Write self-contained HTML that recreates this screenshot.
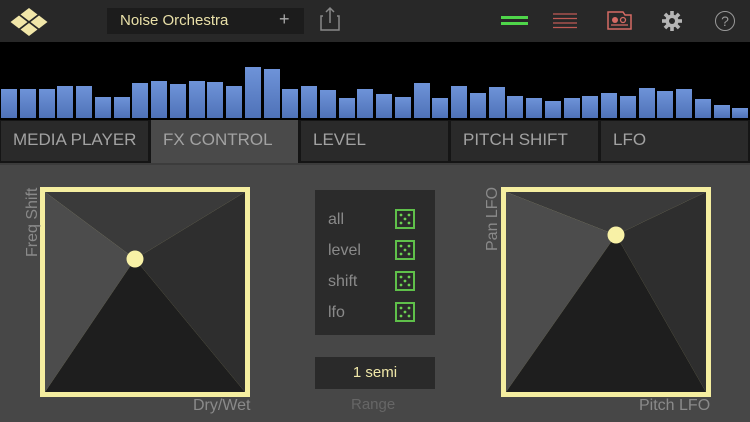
<!DOCTYPE html>
<html><head><style>
*{margin:0;padding:0;box-sizing:border-box}
body{width:750px;height:422px;background:#474747;font-family:"Liberation Sans",sans-serif;position:relative;overflow:hidden}
.hdr{position:absolute;left:0;top:0;width:750px;height:42px;background:#282828}
.viz{position:absolute;left:0;top:42px;width:750px;height:78px;background:#000}
.bar{position:absolute;bottom:2px;width:16px;background:linear-gradient(#6e93d8,#4f72b8)}
.tab{position:absolute;top:121px;height:40px;background:#2a2a2a;color:#a2a2a2;font-size:17px;line-height:38px;padding-left:12px}
.abs{position:absolute}
.lbl{color:#8a8a8a;font-size:16px}
</style></head><body>
<div class="hdr"></div>
<svg class="abs" style="left:9px;top:8px" width="40" height="28" viewBox="0 0 40 28">
<g fill="#f1e6a8"><polygon points="20,0 28.5,6.5 20,13 11.5,6.5"/><polygon points="10,7.5 18.5,14 10,20.5 1.5,14"/><polygon points="30,7.5 38.5,14 30,20.5 21.5,14"/><polygon points="20,15 28.5,21.5 20,28 11.5,21.5"/></g></svg>
<div class="abs" style="left:107px;top:8px;width:197px;height:26px;background:#1c1c1c"></div>
<div class="abs" style="left:120px;top:12px;color:#e9e0a8;font-size:15px">Noise Orchestra</div>
<div class="abs" style="left:279px;top:9px;color:#aaa;font-size:18px">+</div>
<svg class="abs" style="left:320px;top:6px" width="20" height="26"><path d="M3 10H1v14h18V10h-2M10 2v15M6 6l4-4 4 4" fill="none" stroke="#888" stroke-width="1.5"/></svg>
<div class="abs" style="left:501px;top:16px;width:27px;height:3px;background:#4fd64a"></div>
<div class="abs" style="left:501px;top:22px;width:27px;height:3px;background:#4fd64a"></div>
<svg class="abs" style="left:553px;top:13px" width="24" height="16"><g stroke="#c05a54" stroke-width="1.3"><path d="M0 1h24M0 5.5h24M0 10h24M0 14.5h24"/></g></svg>
<svg class="abs" style="left:607px;top:11px" width="25" height="19"><path d="M1 1h15l2 3h6v14H1z" fill="none" stroke="#d66a64" stroke-width="1.5"/><circle cx="8" cy="9" r="3" fill="#d66a64"/><circle cx="16" cy="9" r="2.5" fill="none" stroke="#d66a64" stroke-width="1.3"/><path d="M4 14h17" stroke="#d66a64" stroke-width="1.3"/></svg>
<svg class="abs" style="left:662px;top:11px" width="20" height="20" viewBox="-10 -10 20 20"><g fill="#b5b5b5"><circle r="6.5"/><g id="t"><rect x="-1.8" y="-10" width="3.6" height="4"/></g><use href="#t" transform="rotate(45)"/><use href="#t" transform="rotate(90)"/><use href="#t" transform="rotate(135)"/><use href="#t" transform="rotate(180)"/><use href="#t" transform="rotate(225)"/><use href="#t" transform="rotate(270)"/><use href="#t" transform="rotate(315)"/></g><circle r="3" fill="#282828"/></svg>
<div class="abs" style="left:715px;top:11px;width:20px;height:20px;border:1.3px solid #999;border-radius:50%;color:#999;font-size:14px;text-align:center;line-height:18px">?</div>
<div class="viz" id="viz"></div>
<div class="abs" style="left:0;top:120px;width:750px;height:43px;background:#151515"></div>
<div class="tab" style="left:1px;width:147px">MEDIA PLAYER</div>
<div class="tab" style="left:151px;width:147px;background:#4a4a4a;top:120px;height:43px;line-height:40px">FX CONTROL</div>
<div class="tab" style="left:301px;width:147px">LEVEL</div>
<div class="tab" style="left:451px;width:147px">PITCH SHIFT</div>
<div class="tab" style="left:601px;width:147px">LFO</div>
<div class="abs" style="left:0;top:163px;width:750px;height:2px;background:#3c3c3c"></div>

<svg class="abs" style="left:40px;top:187px" width="210" height="210">
<rect x="0" y="0" width="210" height="210" fill="#f5eea0"/>
<polygon points="5,5 205,5 95,72" fill="#3a3a3a"/>
<polygon points="5,5 95,72 5,205" fill="#4c4c4c"/>
<polygon points="205,5 205,205 95,72" fill="#2e2e2e"/>
<polygon points="5,205 205,205 95,72" fill="#1e1e1e"/>
<circle cx="95" cy="72" r="8.5" fill="#f8f1a6"/></svg>
<div class="abs lbl" style="left:24px;top:257px;transform:rotate(-90deg);transform-origin:0 0;white-space:nowrap">Freq Shift</div>
<div class="abs lbl" style="left:193px;top:397px">Dry/Wet</div>

<svg class="abs" style="left:501px;top:187px" width="210" height="210">
<rect x="0" y="0" width="210" height="210" fill="#f5eea0"/>
<polygon points="5,5 205,5 115,48" fill="#3a3a3a"/>
<polygon points="5,5 115,48 5,205" fill="#4c4c4c"/>
<polygon points="205,5 205,205 115,48" fill="#2e2e2e"/>
<polygon points="5,205 205,205 115,48" fill="#1e1e1e"/>
<circle cx="115" cy="48" r="8.5" fill="#f8f1a6"/></svg>
<div class="abs lbl" style="left:484px;top:251px;transform:rotate(-90deg);transform-origin:0 0;white-space:nowrap">Pan LFO</div>
<div class="abs lbl" style="left:639px;top:397px">Pitch LFO</div>

<div class="abs" style="left:315px;top:190px;width:120px;height:145px;background:#2b2b2b"></div>
<div class="abs lbl" style="left:328px;top:211px">all</div>
<div class="abs lbl" style="left:328px;top:242px">level</div>
<div class="abs lbl" style="left:328px;top:273px">shift</div>
<div class="abs lbl" style="left:328px;top:304px">lfo</div>
<svg class="abs" style="left:395px;top:209px" width="22" height="118">
<defs><g id="d"><rect x="1" y="1" width="18" height="18" fill="none" stroke="#5fc04a" stroke-width="2"/><g fill="#6bd052"><circle cx="6" cy="6" r="1.4"/><circle cx="14" cy="6" r="1.4"/><circle cx="10" cy="10" r="1.4"/><circle cx="6" cy="14" r="1.4"/><circle cx="14" cy="14" r="1.4"/></g></g></defs>
<use href="#d" y="0"/><use href="#d" y="31"/><use href="#d" y="62"/><use href="#d" y="93"/></svg>
<div class="abs" style="left:315px;top:357px;width:120px;height:32px;background:#2a2a2a;color:#f0e8a8;font-size:15px;text-align:center;line-height:32px">1 semi</div>
<div class="abs" style="left:351px;top:396px;color:#666;font-size:15px">Range</div>
<script>
var h=[89,89,89,86,86,97,97,83,81,84,81,82,86,67,69,89,86,90,98,89,94,97,83,98,86,93,87,96,98,101,98,96,93,96,88,91,89,99,105,108];
var v=document.getElementById('viz'),s='';
for(var i=0;i<40;i++){s+='<div class="bar" style="left:'+(i*18.75+1)+'px;height:'+(118-h[i])+'px"></div>';}
v.innerHTML=s;
</script>
</body></html>
